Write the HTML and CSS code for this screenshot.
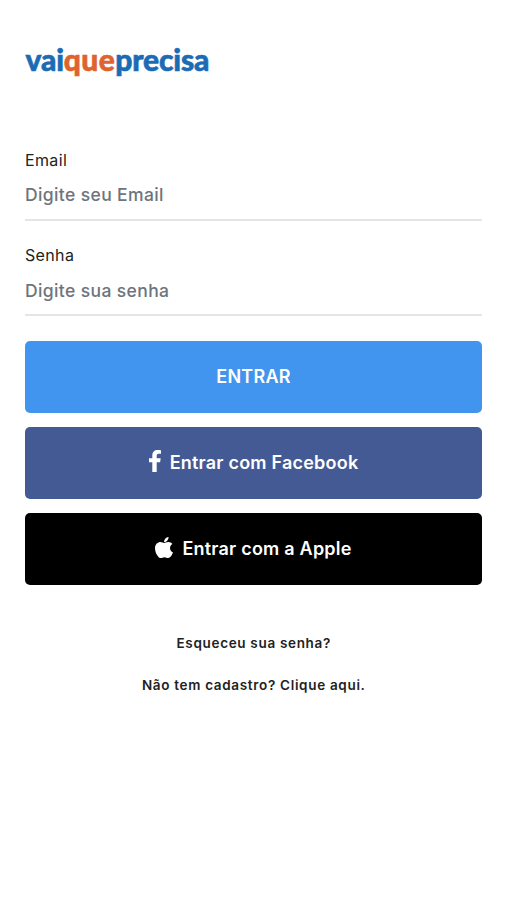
FILE: index.html
```html
<!DOCTYPE html>
<html lang="pt-BR">
<head>
    <meta charset="UTF-8">
    <meta name="viewport" content="width=device-width, initial-scale=1.0">
    <title>vaiqueprecisa</title>
    <link rel="stylesheet" href="styles.css">
</head>
<body>

<div class="login-container">
    <h1 class="logo">vai<span>que</span>precisa</h1>

    <form class="login-form">
        <div class="form-group">
            <label for="email">Email</label>
            <input type="email" id="email" placeholder="Digite seu Email">
        </div>
        <div class="form-group">
            <label for="senha">Senha</label>
            <input type="password" id="senha" placeholder="Digite sua senha">
        </div>

        <div class="buttons">
            <button type="submit" class="btn btn-entrar">ENTRAR</button>
            <button type="button" class="btn btn-facebook">
                <svg class="icon-facebook" viewBox="0 0 12 22">
                    <path d="M3.300 22V12.200H0V8.200h3.300V5.600C3.300 2 5.400 0 8.700 0c1.500 0 2.800.1 3.300.2v3.600H9.800C8.200 3.800 7.700 4.600 7.700 5.900v2.300h4l-.6 4H7.700V22z"/>
                </svg>
                <span>Entrar com Facebook</span>
            </button>
            <button type="button" class="btn btn-apple">
                <svg class="icon-apple" viewBox="4 32 376 448" preserveAspectRatio="none">
                    <path d="M318.700 268.700c-.2-36.700 16.400-64.400 50-84.800-18.800-26.900-47.200-41.700-84.700-44.600-35.500-2.800-74.300 20.700-88.500 20.700-15 0-49.400-19.700-76.400-19.700C63.300 141.200 4 184.800 4 273.500q0 39.300 14.400 81.200c12.800 36.700 59 126.700 107.200 125.200 25.200-.6 43-17.900 75.800-17.900 31.800 0 48.300 17.900 76.400 17.900 48.600-.7 90.400-82.500 102.600-119.300-65.200-30.700-61.700-90-61.700-91.900zm-56.600-164.200c27.300-32.400 24.800-61.900 24-72.500-24.100 1.400-52 16.400-67.900 34.900-17.500 19.800-27.800 44.300-25.600 71.900 26.100 2 49.900-11.400 69.500-34.300z"/>
                </svg>
                <span>Entrar com a Apple</span>
            </button>
        </div>
    </form>

    <div class="links">
        <a href="#" class="link-senha">Esqueceu sua senha?</a>
        <a href="#" class="link-cadastro">Não tem cadastro? Clique aqui.</a>
    </div>
</div>

</body>
</html>
```
FILE: styles.css
```css
body {
    margin: 0;
    background-color: #fff;
    font-family: Inter, "Liberation Sans", sans-serif;
    color: #222;
}

.login-container {
    box-sizing: border-box;
    min-height: 100vh;
    padding: 39px 24px 0 25.500px;
}

.logo {
    margin: 0 0 68.500px;
    font-family: Lato, sans-serif;
    font-size: 30px;
    font-weight: 900;
    line-height: 40px;
    letter-spacing: -0.15px;
    color: #1b6bb5;
    -webkit-text-stroke: 0.6px currentColor;
}

.logo span {
    letter-spacing: 0.4px;
    color: #e0622d;
}

.login-form {
    margin-left: -0.5px;
}

.form-group {
    height: 73px;
    margin-bottom: 22.500px;
    border-bottom: 2px solid #e4e5e7;
    box-sizing: border-box;
}

.form-group label {
    display: block;
    font-size: 16px;
    line-height: 24px;
    letter-spacing: 0.35px;
}

.form-group input {
    display: block;
    width: 100%;
    height: 46px;
    padding: 0;
    box-sizing: border-box;
    border: none;
    outline: none;
    background: none;
    font-family: inherit;
    font-size: 17.500px;
    font-weight: 500;
    letter-spacing: 0.38px;
    color: #222;
}

.form-group input::placeholder {
    color: #6d747c;
    opacity: 1;
}

.buttons {
    display: flex;
    flex-direction: column;
    gap: 13.500px;
    padding-top: 2px;
}

.btn {
    display: flex;
    align-items: center;
    justify-content: center;
    gap: 9px;
    height: 72.500px;
    padding: 0;
    border: none;
    border-radius: 5px;
    font-family: inherit;
    font-size: 18px;
    font-weight: 600;
    letter-spacing: 0.22px;
    color: #fff;
    cursor: pointer;
}

.btn svg {
    fill: #fff;
    margin-bottom: 3px;
}

.btn-entrar {
    background-color: #4295ef;
}

.btn-facebook {
    background-color: #435a95;
}

.btn-apple {
    background-color: #000;
}

.icon-facebook {
    width: 12px;
    height: 22px;
}

.icon-apple {
    width: 18px;
    height: 21px;
}

.links {
    display: flex;
    flex-direction: column;
    align-items: center;
    gap: 22px;
    margin-top: 48px;
}

.links a {
    font-size: 13.500px;
    font-weight: 600;
    line-height: 20px;
    letter-spacing: 0.68px;
    color: #222;
    text-decoration: none;
}
```
